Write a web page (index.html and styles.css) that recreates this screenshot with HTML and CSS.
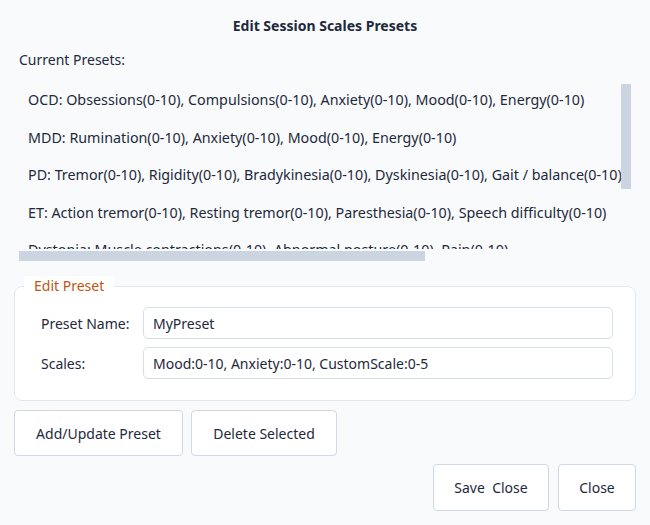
FILE: index.html
```html
<!DOCTYPE html>
<html lang="en">
<head>
    <meta charset="UTF-8">
    <title>Edit Session Scales Presets</title>
    <link rel="stylesheet" href="styles.css">
</head>
<body>
    <div class="dialog-title">Edit Session Scales Presets</div>

    <div class="list-label">Current Presets:</div>
    <div class="preset-list">
        <div class="list-viewport">
            <div class="preset-item">OCD: Obsessions(0-10), Compulsions(0-10), Anxiety(0-10), Mood(0-10), Energy(0-10)</div>
            <div class="preset-item">MDD: Rumination(0-10), Anxiety(0-10), Mood(0-10), Energy(0-10)</div>
            <div class="preset-item">PD: Tremor(0-10), Rigidity(0-10), Bradykinesia(0-10), Dyskinesia(0-10), Gait / balance(0-10)</div>
            <div class="preset-item">ET: Action tremor(0-10), Resting tremor(0-10), Paresthesia(0-10), Speech difficulty(0-10)</div>
            <div class="preset-item">Dystonia: Muscle contractions(0-10), Abnormal posture(0-10), Pain(0-10)</div>
            <div class="preset-item">TS: Motor tics(0-10), Vocal tics(0-10), Premonitory urge(0-10), Anxiety(0-10), Mood(0-10)</div>
            <div class="preset-item">Pain: Pain intensity(0-10), Mood(0-10), Sleep(0-10)</div>
        </div>
        <div class="scroll-track-v"><div class="scroll-thumb-v"></div></div>
        <div class="scroll-track-h"><div class="scroll-thumb-h"></div></div>
    </div>

    <fieldset class="edit-group">
        <legend class="edit-legend">Edit Preset</legend>
        <div class="form-row">
            <label class="form-label" for="preset-name">Preset Name:</label>
            <input type="text" class="form-input" id="preset-name" value="MyPreset">
        </div>
        <div class="form-row">
            <label class="form-label" for="preset-scales">Scales:</label>
            <input type="text" class="form-input" id="preset-scales" value="Mood:0-10, Anxiety:0-10, CustomScale:0-5">
        </div>
    </fieldset>

    <div class="button-row">
        <button class="dlg-button btn-add">Add/Update Preset</button>
        <button class="dlg-button btn-delete">Delete Selected</button>
    </div>

    <div class="button-row button-row-end">
        <button class="dlg-button btn-save">Save  Close</button>
        <button class="dlg-button btn-close">Close</button>
    </div>
</body>
</html>
```

FILE: styles.css
```css
body {
    font-family: "Noto Sans", "Open Sans", sans-serif;
    font-size: 14px;
    color: #1e293b;
    margin: 0;
    padding: 0 14px;
    background: #f8fafc;
}

.dialog-title {
    text-align: center;
    font-weight: 700;
    padding-top: 16px;
    line-height: 20px;
}

.list-label {
    margin-top: 14px;
    padding-left: 5px;
    line-height: 20px;
}

/* list with static scrollbars drawn beside the viewport */
.preset-list {
    display: grid;
    grid-template-columns: 1fr 10px;
    grid-template-rows: 168px 10px;
    row-gap: 2px;
    margin: 11px 5px 0 5px;
}

.list-viewport {
    overflow: hidden;
}

.scroll-track-v {
    padding-top: 3px;
}

.scroll-thumb-v {
    height: 105px;
    background: #cbd5e1;
}

.scroll-track-h {
    grid-column: 1 / 2;
}

.scroll-thumb-h {
    width: 406px;
    height: 10px;
    background: #cbd5e1;
}

.preset-item {
    white-space: nowrap;
    padding: 8px 9px;
    line-height: 21.5px;
    font-size: 14.3px;
}

.edit-group {
    margin: 15px 0 0 0;
    padding: 11px 22px 21px 26px;
    border: 1px solid #e2e8f0;
    border-radius: 8px;
    background: #ffffff;
}

.edit-legend {
    margin-left: -17px;
    padding: 0 10px;
    line-height: 20px;
    color: #bf5511;
    background: #ffffff;
}

.form-row {
    display: flex;
    align-items: center;
    gap: 10px;
    margin-bottom: 8px;
}

.form-row:last-child {
    margin-bottom: 0;
}

.form-label {
    width: 92px;
    flex-shrink: 0;
}

.form-input {
    flex: 1;
    height: 32px;
    box-sizing: border-box;
    padding: 0 9px;
    font-family: inherit;
    font-size: 14px;
    color: #1e293b;
    border: 1px solid #d5dde8;
    border-radius: 5px;
    background: #ffffff;
}

.button-row {
    display: flex;
    gap: 8px;
    margin-top: 9px;
}

.button-row-end {
    justify-content: flex-end;
    gap: 9px;
    margin-top: 8px;
}

.dlg-button {
    height: 46px;
    padding: 0;
    font-family: inherit;
    font-size: 14px;
    color: #1e293b;
    background: #ffffff;
    border: 1px solid #cfd8e3;
    border-radius: 4px;
    white-space: pre;
}

.btn-add { width: 169px; }
.btn-delete { width: 146px; }
.btn-save { width: 116px; height: 47px; }
.btn-close { width: 78px; height: 47px; }
```
